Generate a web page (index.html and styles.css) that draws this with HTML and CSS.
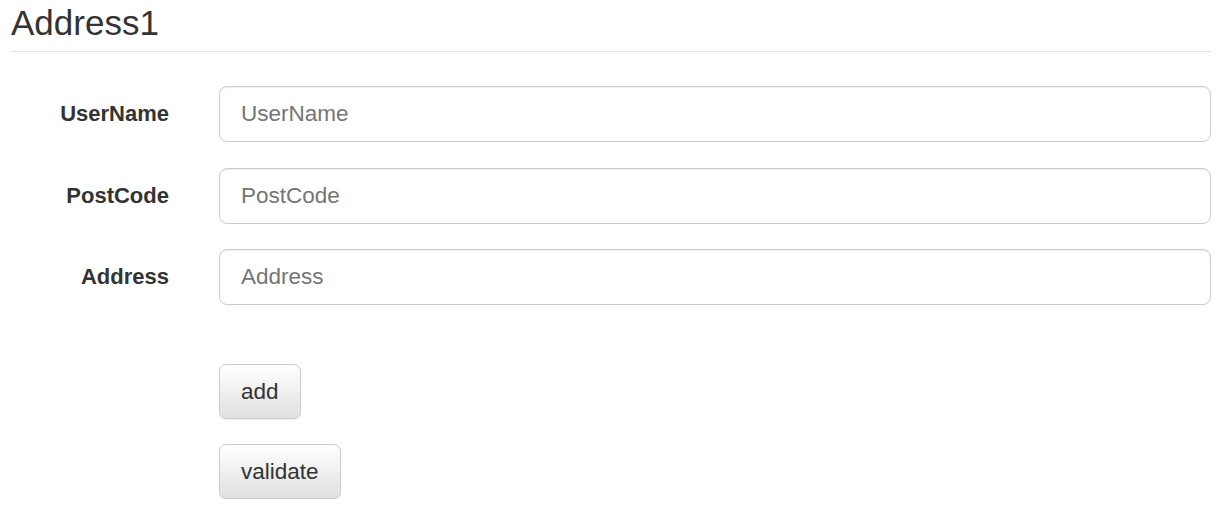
FILE: index.html
```html
<!DOCTYPE html>
<html>
<head>
<meta charset="utf-8">
<link rel="stylesheet" href="styles.css">
</head>
<body>
<div class="page">
  <h3 class="page-header">Address1</h3>
  <form class="form">
    <div class="row">
      <label class="label" for="u">UserName</label>
      <input class="input" id="u" type="text" placeholder="UserName">
    </div>
    <div class="row">
      <label class="label" for="p">PostCode</label>
      <input class="input" id="p" type="text" placeholder="PostCode">
    </div>
    <div class="row">
      <label class="label" for="a">Address</label>
      <input class="input" id="a" type="text" placeholder="Address">
    </div>
    <div class="actions">
      <button type="button" class="btn">add</button>
      <button type="button" class="btn">validate</button>
    </div>
  </form>
</div>
</body>
</html>
```

FILE: styles.css
```css
html, body {
  margin: 0;
  padding: 0;
  background: #fff;
  color: #333;
  font-family: "Liberation Sans", Arial, Helvetica, sans-serif;
}

.page {
  padding: 4px 14px 0 11px;
}

.page-header {
  margin: 0;
  font-size: 35px;
  font-weight: 400;
  line-height: 38px;
  padding-bottom: 9px;
  border-bottom: 1px solid #e5e5e5;
  color: #333;
}

.form {
  padding-top: 34px;
}

.row {
  display: grid;
  grid-template-columns: 158px 1fr;
  column-gap: 50px;
  align-items: center;
  margin-bottom: 25.5px;
}

.label {
  text-align: right;
  font-weight: 700;
  font-size: 22px;
  color: #333;
}

.input {
  box-sizing: border-box;
  height: 56px;
  width: 100%;
  padding: 0 21px;
  font-family: inherit;
  font-size: 22.5px;
  color: #555;
  border: 1px solid #ccc;
  border-radius: 8px;
  background: #fff;
  box-shadow: inset 0 1px 1px rgba(0,0,0,0.075);
  outline: none;
}

.input::placeholder {
  color: #757575;
}

.actions {
  display: flex;
  flex-direction: column;
  align-items: flex-start;
  gap: 25px;
  padding-left: 208px;
  padding-top: 33.5px;
}

.btn {
  box-sizing: border-box;
  height: 55px;
  padding: 0 21px;
  font-family: inherit;
  font-size: 22.5px;
  color: #333;
  border: 1px solid #ccc;
  border-radius: 7px;
  background: linear-gradient(to bottom, #fff 0%, #e0e0e0 100%);
  box-shadow: inset 0 1px 0 rgba(255,255,255,0.15), 0 1px 1px rgba(0,0,0,0.075);
  cursor: pointer;
}
```
